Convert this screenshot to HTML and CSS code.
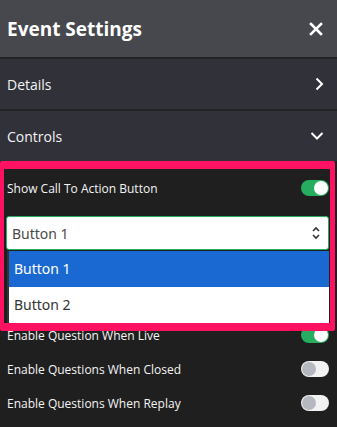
FILE: index.html
```html
<!DOCTYPE html>
<html lang="en">
<head>
  <meta charset="UTF-8">
  <title>Event Settings</title>
  <link rel="stylesheet" href="styles.css">
</head>
<body>

  <div class="panel">
    <div class="header">
      <h1>Event Settings</h1>
      <svg class="close" width="14" height="14" viewBox="0 0 14 14">
        <path d="M2 2 L12 12 M12 2 L2 12" stroke="#fff" stroke-width="2.6" stroke-linecap="square"/>
      </svg>
    </div>

    <div class="section">
      <span>Details</span>
      <svg width="10" height="14" viewBox="0 0 10 14">
        <path d="M2.5 1.5 L8 7 L2.5 12.5" fill="none" stroke="#fff" stroke-width="2"/>
      </svg>
    </div>

    <div class="section last">
      <span>Controls</span>
      <svg width="14" height="10" viewBox="0 0 14 10">
        <path d="M1.5 2 L7 7.5 L12.5 2" fill="none" stroke="#fff" stroke-width="2"/>
      </svg>
    </div>

    <div class="controls">
      <div class="row">
        <span>Show Call To Action Button</span>
        <div class="toggle on"></div>
      </div>

      <div class="select-wrap">
        <div class="select">
          <span>Button 1</span>
          <svg width="10" height="14" viewBox="0 0 10 14">
            <path d="M2 5 L5 2 L8 5 M2 9 L5 12 L8 9" fill="none" stroke="#333" stroke-width="1.6"/>
          </svg>
        </div>
        <div class="dropdown">
          <div class="option selected">Button 1</div>
          <div class="option">Button 2</div>
        </div>
      </div>

      <div class="row">
        <span>Enable Question When Live</span>
        <div class="toggle on"></div>
      </div>
      <div class="row">
        <span>Enable Questions When Closed</span>
        <div class="toggle"></div>
      </div>
      <div class="row">
        <span>Enable Questions When Replay</span>
        <div class="toggle"></div>
      </div>
    </div>

    <div class="highlight"></div>
  </div>

</body>
</html>
```

FILE: styles.css
```css
body {
  margin: 0;
  font-family: 'Open Sans', 'Noto Sans', sans-serif;
  background: #1f1f1f;
  color: #f4f4f4;
}
.panel {
  position: relative;
  width: 337px;
  height: 427px;
  overflow: hidden;
  background: #1f1f1f;
}
.header {
  height: 57px;
  background: #47484d;
  border-bottom: 2px solid #232323;
  display: flex;
  align-items: center;
  justify-content: space-between;
  padding: 0 14px 0 7px;
}
.header h1 {
  margin: 0;
  font-size: 19px;
  font-weight: 700;
  color: #fff;
}
.section {
  height: 50px;
  background: #303139;
  border-bottom: 2px solid #232323;
  display: flex;
  align-items: center;
  justify-content: space-between;
  padding: 0 13px 0 7px;
  font-size: 14px;
}
.section.last {
  border-bottom: none;
}
.controls {
  padding: 10px 8px 0 7px;
}
.row {
  height: 34px;
  display: flex;
  align-items: center;
  justify-content: space-between;
  font-size: 12px;
}
.toggle {
  position: relative;
  width: 28px;
  height: 16px;
  border-radius: 8px;
  background: #f2f2f2;
}
.toggle::after {
  content: "";
  position: absolute;
  left: 1px;
  top: 1px;
  width: 14px;
  height: 14px;
  border-radius: 50%;
  background: #b5b8be;
}
.toggle.on {
  background: #26ad5f;
}
.toggle.on::after {
  left: auto;
  right: 1px;
  background: #fff;
}
.select-wrap {
  position: relative;
  margin: 11px 0 68px -1px;
}
.select {
  height: 32px;
  background: #fff;
  border: 1px solid #26ad5f;
  border-radius: 3px;
  display: flex;
  align-items: center;
  justify-content: space-between;
  padding: 0 7px 0 5px;
  color: #4a4a4a;
  font-family: 'Noto Sans', sans-serif;
  font-size: 14px;
}
.dropdown {
  position: absolute;
  top: 35px;
  left: 1px;
  right: 0;
  background: #fff;
  border-left: 2px solid #333;
  font-family: 'Noto Sans', sans-serif;
  font-size: 14px;
  color: #333;
  z-index: 2;
}
.option {
  height: 36px;
  line-height: 36px;
  padding-left: 5px;
}
.option.selected {
  background: #1a69d2;
  color: #fff;
}
.highlight {
  position: absolute;
  left: 0;
  top: 161px;
  width: 326px;
  height: 154px;
  border-style: solid;
  border-color: #fe1261;
  border-width: 8px 5px 8px 4px;
  border-radius: 2px;
  z-index: 3;
}
```
